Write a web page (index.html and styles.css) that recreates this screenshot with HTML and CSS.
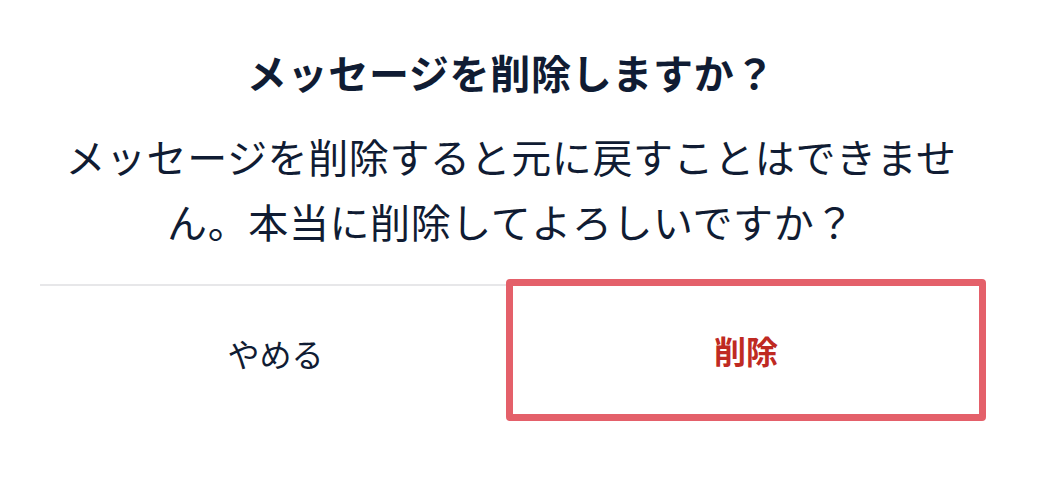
FILE: index.html
```
<!DOCTYPE html>
<html lang="ja">
<head>
<meta charset="utf-8">
<title>メッセージを削除しますか？</title>
<link rel="stylesheet" href="styles.css">
</head>
<body>
<div class="dialog">
  <h1 class="title">メッセージを削除しますか？</h1>
  <p class="message">メッセージを削除すると元に戻すことはできません。本当に削除してよろしいですか？</p>
  <div class="actions">
    <button class="btn btn-cancel" type="button">やめる</button>
    <button class="btn btn-delete" type="button">削除</button>
  </div>
</div>
</body>
</html>
```
FILE: styles.css
```
html, body {
  margin: 0;
  padding: 0;
  background: #ffffff;
}
body {
  font-family: "Noto Sans CJK JP", "Noto Sans", sans-serif;
  color: #101c33;
}
.dialog {
  margin-left: 40px;
  width: 942px;
  padding-top: 47px;
}
.title {
  margin: 0;
  font-size: 40px;
  font-weight: 700;
  line-height: 50px;
  text-align: center;
  letter-spacing: 0.7px;
}
.message {
  margin: 27px 0 0;
  padding: 0 16px;
  font-size: 40px;
  font-weight: 400;
  line-height: 65px;
  text-align: center;
  letter-spacing: 0.6px;
}
.actions {
  margin-top: 30px;
  border-top: 2px solid #e7e7e9;
  display: grid;
  grid-template-columns: 1fr 1fr;
  align-items: stretch;
}
.btn {
  box-sizing: border-box;
  height: 134px;
  border: 0;
  background: transparent;
  font-family: inherit;
  font-size: 32px;
  padding: 0;
  cursor: pointer;
}
.btn-cancel {
  color: #101c33;
  font-weight: 400;
}
.btn-delete {
  color: #bf2a22;
  font-weight: 700;
  height: 142px;
  margin: -7px -4px 0 -5px;
  border: 7px solid #e4606a;
  border-radius: 4px;
}
```
